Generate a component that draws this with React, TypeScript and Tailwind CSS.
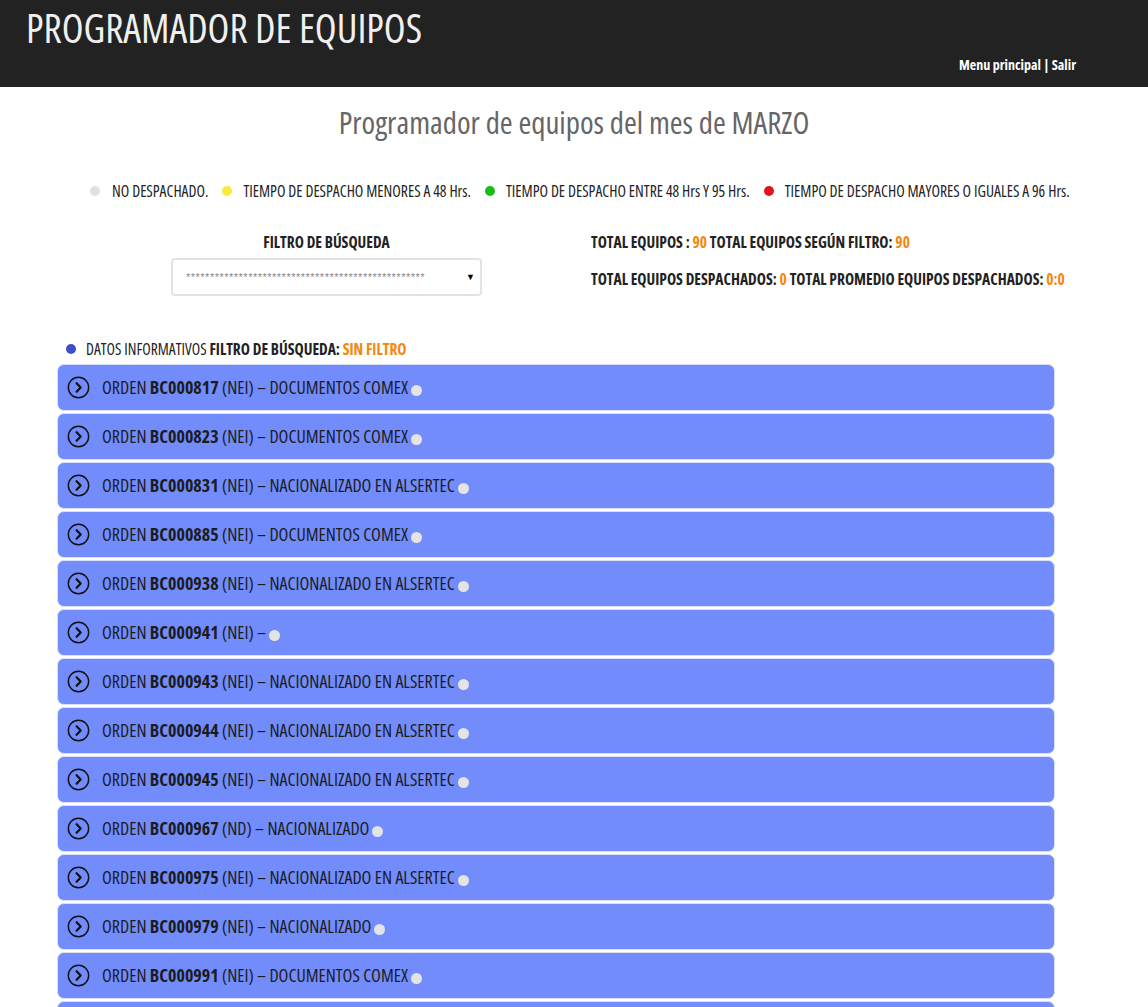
import React from "react";

const rows: [string, string, string][] = [
  ["BC000817", "(NEI)", "DOCUMENTOS COMEX"],
  ["BC000823", "(NEI)", "DOCUMENTOS COMEX"],
  ["BC000831", "(NEI)", "NACIONALIZADO EN ALSERTEC"],
  ["BC000885", "(NEI)", "DOCUMENTOS COMEX"],
  ["BC000938", "(NEI)", "NACIONALIZADO EN ALSERTEC"],
  ["BC000941", "(NEI)", ""],
  ["BC000943", "(NEI)", "NACIONALIZADO EN ALSERTEC"],
  ["BC000944", "(NEI)", "NACIONALIZADO EN ALSERTEC"],
  ["BC000945", "(NEI)", "NACIONALIZADO EN ALSERTEC"],
  ["BC000967", "(ND)", "NACIONALIZADO"],
  ["BC000975", "(NEI)", "NACIONALIZADO EN ALSERTEC"],
  ["BC000979", "(NEI)", "NACIONALIZADO"],
  ["BC000991", "(NEI)", "DOCUMENTOS COMEX"],
  ["BC000995", "(NEI)", "DOCUMENTOS COMEX"],
];

function Chevron() {
  return (
    <svg width="23" height="23" viewBox="0 0 24 24" fill="none" stroke="#111" strokeWidth="1.5" className="shrink-0">
      <circle cx="12" cy="12" r="10.6" />
      <path d="M10 7.6 L14.3 12 L10 16.4" strokeWidth="2.3" strokeLinecap="round" strokeLinejoin="round" />
    </svg>
  );
}

function Dot({ c }: { c: string }) {
  return <span className={`w-[10px] h-[10px] rounded-full shrink-0 ${c}`} />;
}

export default function App() {
  return (
    <div className="min-h-[1007px] bg-white text-[#222] font-['Open_Sans',sans-serif] [font-stretch:75%]">
      <header className="h-[87px] bg-[#222222]">
        <div className="px-[26px] pt-[4px] text-[40px] leading-[48px] text-[#f0f0f0] whitespace-nowrap">PROGRAMADOR DE EQUIPOS</div>
        <div className="flex justify-end pr-[72px] mt-[3px] text-[14px] leading-[20px] font-bold text-white">
          <span>Menu principal | Salir</span>
        </div>
      </header>

      <h1 className="text-center text-[31px] leading-[40px] text-[#666] mt-[15px] whitespace-nowrap">Programador de equipos del mes de MARZO</h1>

      <div className="flex items-center pl-[90px] mt-[39px] text-[15.6px] leading-[20px] whitespace-nowrap">
        <Dot c="bg-[#e0e0e0]" />
        <span className="ml-[12px] mr-[14px]">NO DESPACHADO.</span>
        <Dot c="bg-[#fbe93b]" />
        <span className="ml-[11px] mr-[14px]">TIEMPO DE DESPACHO MENORES A 48 Hrs.</span>
        <Dot c="bg-[#1bbd14]" />
        <span className="ml-[11px] mr-[14px]">TIEMPO DE DESPACHO ENTRE 48 Hrs Y 95 Hrs.</span>
        <Dot c="bg-[#e3141e]" />
        <span className="ml-[11px]">TIEMPO DE DESPACHO MAYORES O IGUALES A 96 Hrs.</span>
      </div>

      <div className="flex mt-[31px]">
        <div className="w-[311px] ml-[171px] flex flex-col items-center">
          <div className="text-[15.5px] leading-[20px] font-bold whitespace-nowrap">FILTRO DE BÚSQUEDA</div>
          <div className="mt-[6px] w-full h-[38px] border-2 border-[#e3e3e3] rounded-[4px] flex items-center justify-between pl-[13px] pr-[5px]">
            <span className="text-[11px] text-[#888] tracking-[0.5px] overflow-hidden whitespace-nowrap font-['Liberation_Sans',sans-serif] [font-stretch:100%]">{"*".repeat(50)}</span>
            <span className="text-[9px] text-black">▼</span>
          </div>
        </div>
        <div className="ml-[109px] text-[15.5px] font-bold leading-[20px] whitespace-nowrap">
          <div>
            TOTAL EQUIPOS : <span className="text-[#f5870c]">90</span> TOTAL EQUIPOS SEGÚN FILTRO: <span className="text-[#f5870c]">90</span>
          </div>
          <div className="mt-[17px]">
            TOTAL EQUIPOS DESPACHADOS: <span className="text-[#f5870c]">0</span> TOTAL PROMEDIO EQUIPOS DESPACHADOS: <span className="text-[#f5870c]">0:0</span>
          </div>
        </div>
      </div>

      <div className="flex items-center pl-[66px] mt-[43px] text-[15.5px] leading-[20px] whitespace-nowrap">
        <span className="w-[10px] h-[10px] rounded-full bg-[#3c4fc9] mr-[10px]" />
        <span>DATOS INFORMATIVOS&nbsp;</span>
        <span className="font-bold">FILTRO DE BÚSQUEDA:&nbsp;</span>
        <span className="font-bold text-[#f5870c]">SIN FILTRO</span>
      </div>

      <div className="ml-[57px] w-[998px] mt-[5px] flex flex-col gap-[2px]">
        {rows.map(([code, tag, desc]) => (
          <div key={code} className="h-[47px] bg-[#728cfc] border border-[#d9dff9] rounded-[7px] flex items-start pl-[9px] pt-[9px]">
            <div className="pt-[2px]">
              <Chevron />
            </div>
            <div className="ml-[12px] text-[18px] leading-[26px] text-[#1c1c1c] flex items-end whitespace-nowrap">
              <span>ORDEN&nbsp;</span>
              <span className="font-bold">{code}</span>
              <span>&nbsp;{tag} – {desc}</span>
              <span className="ml-[3px] mb-[4px] w-[11px] h-[11px] rounded-full bg-[#e4e4e4]" />
            </div>
          </div>
        ))}
      </div>
    </div>
  );
}
